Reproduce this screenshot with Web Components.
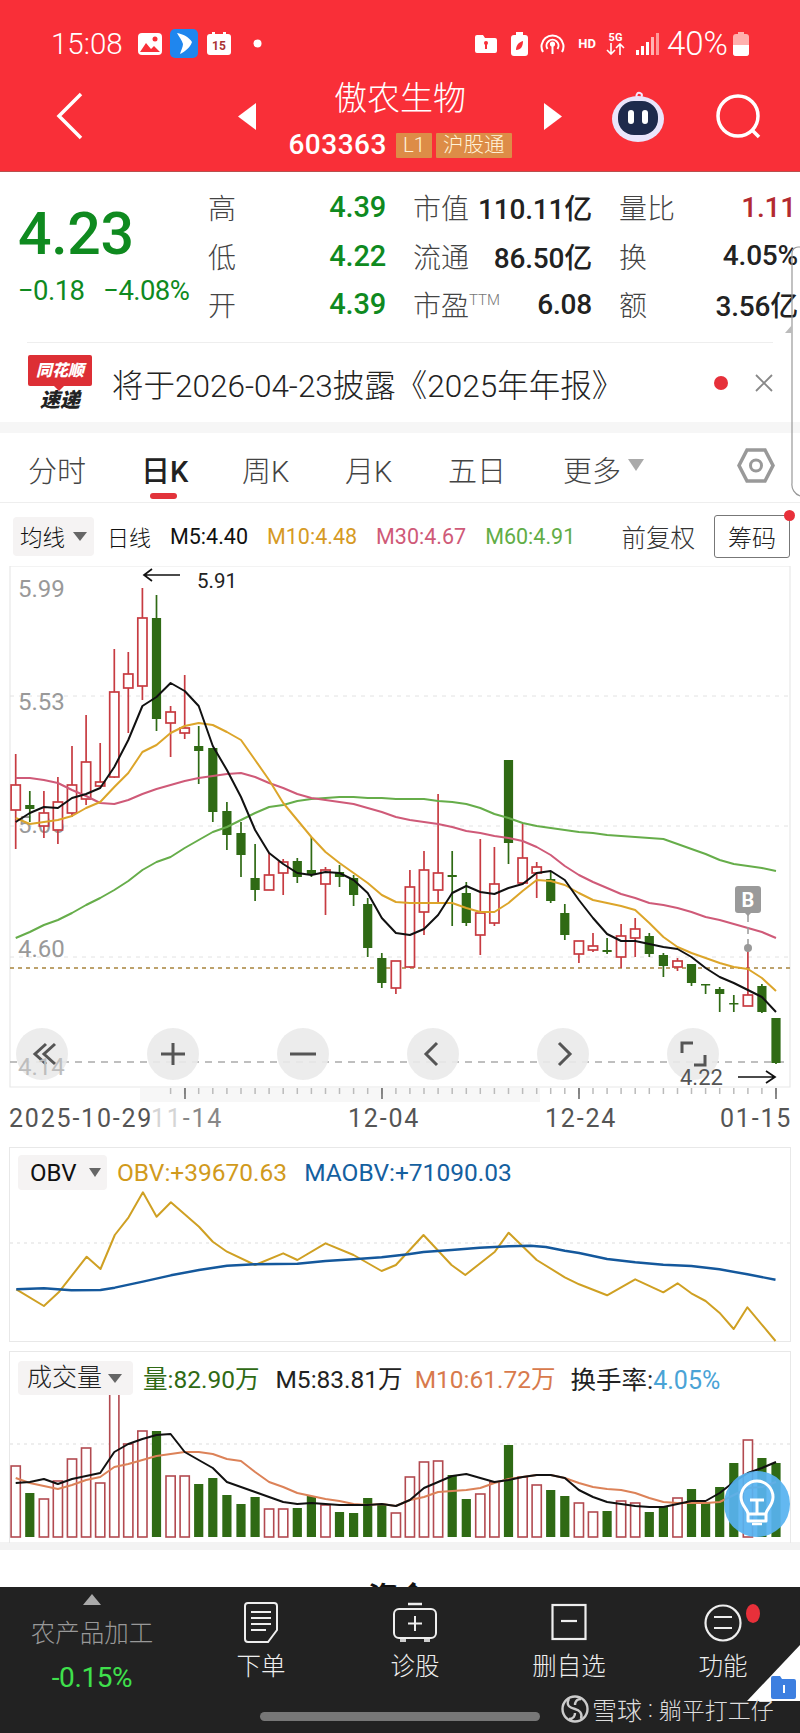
<!DOCTYPE html>
<html lang="zh">
<head>
<meta charset="utf-8">
<title>傲农生物 603363</title>
<style>
  html, body { margin: 0; padding: 0; background: #fff; }
  body {
    width: 800px; height: 1733px; overflow: hidden; position: relative;
    font-family: Roboto, "Noto Sans CJK SC", sans-serif;
    font-weight: 300;
    color: #222;
  }
</style>
</head>
<body>
<stock-header></stock-header>
<quote-panel></quote-panel>
<news-strip></news-strip>
<period-tabs></period-tabs>
<ma-toolbar></ma-toolbar>
<kline-chart></kline-chart>
<obv-chart></obv-chart>
<volume-chart></volume-chart>
<clipped-tabs></clipped-tabs>
<bottom-bar></bottom-bar>
<scroll-edge></scroll-edge>

<script>
// candle x positions are shared by the three charts
const candleX = i => 15.7 + 14.08 * i;
const line = (ys, color, w = 2) =>
  `<polyline fill="none" stroke="${color}" stroke-width="${w}" stroke-linejoin="round" points="${ys.map((y, i) => candleX(i).toFixed(1) + ',' + y).join(' ')}"/>`;

class StockHeader extends HTMLElement {
  connectedCallback() {
    this.attachShadow({ mode: 'open' });
    this.shadowRoot.innerHTML = `
      <style>
        :host { display: block; height: 171px; background: #f92f38; color: #fff; border-bottom: 1px solid #b8504e; }
        .status { display: flex; align-items: center; height: 57px; padding: 15px 51px 0 51px; box-sizing: content-box; }
        .time { font-size: 29.5px; width: 84px; font-weight: 300; }
        .icons, .right { display: flex; align-items: center; }
        .right { margin-left: auto; }
        .batt-text { font-size: 33px; font-weight: 300; margin: 0 5px 0 8px; }
        .hd { font-size: 13px; font-weight: 700; margin: 0 10px 0 13px; }
        .fiveg { display: flex; flex-direction: column; align-items: center; font-size: 11px; font-weight: 700; line-height: 11px; margin-right: 11px; }
        .nav { display: grid; grid-template-columns: 238px 324px 49px 105px 1fr; align-items: center; height: 99px; margin-top: -5px; }
        .back { margin-left: 55px; display: block; }
        .center { display: flex; align-items: center; justify-content: space-between; }
        .title { display: flex; flex-direction: column; align-items: center; }
        .name { font-size: 33px; line-height: 44px; font-weight: 300; margin-top: 3px; }
        .code { display: flex; align-items: center; gap: 4px; margin-top: 10px; }
        .num { font-size: 28px; font-weight: 500; margin-right: 5px; line-height: 28px; letter-spacing: .5px; }
        .tag { background: #dd8c47; color: #fff3d9; font-size: 20.5px; line-height: 25px; height: 25px; padding: 0 7px; border-radius: 1px; }
      </style>
      <div class="status">
        <span class="time">15:08</span>
        <div class="icons">
          <svg width="24" height="22" viewBox="0 0 24 22" style="margin-left:3px"><rect width="24" height="22" rx="4" fill="#fff"/><circle cx="17" cy="6" r="2.5" fill="#f92f38"/><path d="M2 19l6-9 5 6 3-3 6 6z" fill="#f92f38"/></svg>
          <svg width="28" height="29" viewBox="0 0 28 29" style="margin-left:8px"><rect width="28" height="29" rx="5" fill="#1f86ee"/><path d="M7 4c6 1 12 4 15 9-2 6-8 10-12 12 1-4 3-7 3-10C12 11 9 8 7 4z" fill="#fff"/></svg>
          <svg width="24" height="23" viewBox="0 0 24 23" style="margin-left:9px"><rect y="2" width="24" height="21" rx="3" fill="#fff"/><rect x="5" width="3" height="4" fill="#fff"/><rect x="16" width="3" height="4" fill="#fff"/><text x="12" y="18" text-anchor="middle" font-size="12" font-weight="700" fill="#a33">15</text></svg>
          <svg width="9" height="9" viewBox="0 0 9 9" style="margin-left:22px"><circle cx="4.5" cy="4.5" r="4" fill="#fff"/></svg>
        </div>
        <div class="right">
          <svg width="22" height="19" viewBox="0 0 22 19"><path d="M0 3a2 2 0 0 1 2-2h6l2 3h10a2 2 0 0 1 2 2v11a2 2 0 0 1-2 2H2a2 2 0 0 1-2-2z" fill="#fff"/><circle cx="11" cy="9" r="2" fill="#f92f38"/><rect x="10" y="9" width="2" height="6" fill="#f92f38"/></svg>
          <svg width="17" height="24" viewBox="0 0 17 24" style="margin-left:14px"><rect y="3" width="17" height="21" rx="3" fill="#fff"/><rect x="5" width="7" height="4" fill="#fff"/><path d="M5 18c0-5 3-8 7-9 0 5-2 9-7 9z" fill="#f92f38"/></svg>
          <svg width="25" height="26" viewBox="0 0 25 26" style="margin-left:12px" fill="none" stroke="#fff" stroke-width="2"><path d="M3 21a11 11 0 1 1 19 0"/><path d="M7.5 18a6 6 0 1 1 10 0"/><circle cx="12.5" cy="13" r="1.6" fill="#fff"/><path d="M12.5 15v8"/></svg>
          <span class="hd">HD</span>
          <span class="fiveg">5G<svg width="19" height="12" viewBox="0 0 19 12" fill="none" stroke="#fff" stroke-width="1.6"><path d="M5 0v11M1 7l4 4 4-4M14 12V1M10 5l4-4 4 4"/></svg></span>
          <svg width="23" height="22" viewBox="0 0 23 22"><rect x="0" y="17" width="3" height="5" fill="#fff"/><rect x="5" y="13" width="3" height="9" fill="#fff"/><rect x="10" y="9" width="3" height="13" fill="#fff"/><rect x="15" y="4" width="3" height="18" fill="#ffb3b3"/><rect x="20" y="0" width="3" height="22" fill="#ff9a9a"/></svg>
          <span class="batt-text">40%</span>
          <svg width="16" height="24" viewBox="0 0 16 24"><rect x="5" width="6" height="3" fill="#ffb0ae"/><rect y="2" width="16" height="22" rx="3" fill="#ffb0ae"/><path d="M0 13h16v8a3 3 0 0 1-3 3H3a3 3 0 0 1-3-3z" fill="#fff"/></svg>
        </div>
      </div>
      <div class="nav">
        <svg class="back" width="30" height="50" viewBox="0 0 30 50" fill="none" stroke="#fff" stroke-width="3.5"><path d="M26 2L4 24l22 22"/></svg>
        <div class="center">
          <svg width="18" height="27" viewBox="0 0 18 27"><path d="M18 0v27L0 13.5z" fill="#fff"/></svg>
          <div class="title">
            <span class="name">傲农生物</span>
            <div class="code"><span class="num">603363</span><span class="tag">L1</span><span class="tag">沪股通</span></div>
          </div>
          <svg width="18" height="27" viewBox="0 0 18 27"><path d="M0 0v27l18-13.5z" fill="#fff"/></svg>
        </div>
        <span></span>
        <svg width="54" height="52" viewBox="0 0 54 52">
          <path d="M27 8c-3-3-1-7 2-6s2 3 1 4" fill="none" stroke="#f3e9ff" stroke-width="2"/>
          <ellipse cx="27" cy="28" rx="26" ry="23" fill="#eae5fb"/>
          <rect x="7" y="10" width="40" height="34" rx="16" fill="#1e2a4c"/>
          <rect x="17" y="19" width="6" height="14" rx="3" fill="#fff"/><rect x="31" y="19" width="6" height="14" rx="3" fill="#fff"/>
        </svg>
        <svg width="50" height="46" viewBox="0 0 50 46" fill="none" stroke="#fff" stroke-width="3.5"><circle cx="22" cy="22" r="20"/><path d="M36 36l7 7"/></svg>
      </div>`;
  }
}

class QuotePanel extends HTMLElement {
  connectedCallback() {
    this.attachShadow({ mode: 'open' });
    const rows = [
      ['高', '4.39', '市值', '110.11亿', '量比', '1.11'],
      ['低', '4.22', '流通', '86.50亿', '换', '4.05%'],
      ['开', '4.39', '市盈<sup>TTM</sup>', '6.08', '额', '3.56亿'],
    ];
    this.shadowRoot.innerHTML = `
      <style>
        :host { display: block; height: 171px; box-sizing: border-box; padding-top: 11px; position: relative; }
        .wrap { display: flex; }
        .left { width: 208px; padding-left: 18px; box-sizing: border-box; color: #0f8a1f; }
        .big { font-size: 59px; font-weight: 500; line-height: 78px; margin-top: 12px; letter-spacing: -.3px; }
        .sub { display: flex; gap: 19px; font-size: 27.5px; font-weight: 400; line-height: 30px; margin-top: 3px; letter-spacing: -.6px; white-space: nowrap; }
        .grid { display: grid; grid-template-columns: 178px 179px 179px; column-gap: 27px; }
        .cell { display: flex; justify-content: space-between; align-items: center; height: 48.5px; white-space: nowrap; }
        .lab { font-size: 28px; color: #444; font-weight: 300; }
        .lab sup { font-size: 15px; vertical-align: 11px; line-height: 0; color: #777; }
        .val { font-size: 28px; font-weight: 500; color: #222; letter-spacing: -.2px; }
        .g { color: #0f8a1f; font-size: 29px; }
        .r { color: #b32a30; padding-right: 2px; }
        hr { position: absolute; left: 27px; right: 27px; bottom: 0; margin: 0; border: 0; border-top: 1px solid #eee; }
      </style>
      <div class="wrap">
        <div class="left">
          <div class="big">4.23</div>
          <div class="sub"><span>−0.18</span><span>−4.08%</span></div>
        </div>
        <div class="grid">
          ${rows.map((r, i) => `
            <div class="cell"><span class="lab">${r[0]}</span><span class="val g">${r[1]}</span></div>
            <div class="cell"><span class="lab">${r[2]}</span><span class="val">${r[3]}</span></div>
            <div class="cell"><span class="lab">${r[4]}</span><span class="val ${i === 0 ? 'r' : ''}">${r[5]}</span></div>`).join('')}
        </div>
      </div>
      <hr>`;
  }
}

class NewsStrip extends HTMLElement {
  connectedCallback() {
    this.attachShadow({ mode: 'open' });
    this.shadowRoot.innerHTML = `
      <style>
        :host { display: flex; align-items: center; height: 79px; padding: 0 27px 0 28px; border-bottom: 11px solid #f6f6f6; }
        .logo { width: 64px; display: flex; flex-direction: column; align-items: center; font-style: italic; font-weight: 900; line-height: 1; }
        .bubble { width: 64px; height: 31px; background: #dd2f35; color: #fff; font-size: 16px; display: flex; align-items: center; justify-content: center; border-radius: 2px; position: relative; }
        .bubble::after { content: ""; position: absolute; left: 26px; bottom: -5px; border: 5px solid transparent; border-bottom: 0; border-top-color: #dd2f35; }
        .sd { font-size: 20px; color: #222; margin-top: 4px; }
        .text { font-size: 31.5px; margin-left: 20px; color: #222; white-space: nowrap; }
        .dot { width: 14px; height: 14px; border-radius: 50%; background: #e6303a; margin-left: auto; }
        svg { margin-left: 27px; }
      </style>
      <div class="logo"><div class="bubble">同花顺</div><div class="sd">速递</div></div>
      <span class="text">将于2026-04-23披露《2025年年报》</span>
      <span class="dot"></span>
      <svg width="18" height="18" viewBox="0 0 18 18" stroke="#888" stroke-width="1.8"><path d="M1 1l16 16M17 1L1 17"/></svg>`;
  }
}

class PeriodTabs extends HTMLElement {
  connectedCallback() {
    this.attachShadow({ mode: 'open' });
    this.shadowRoot.innerHTML = `
      <style>
        :host { display: grid; grid-template-columns: 113px 101px 103px 103px 115px 174px 1fr; align-items: center; height: 70px; box-sizing: border-box; padding: 2px 0 0 28px; border-bottom: 1px solid #eee; font-size: 29px; color: #444; }
        .on { color: #222; font-weight: 500; position: relative; }
        .on::after { content: ""; position: absolute; left: 9px; bottom: -9px; width: 27px; height: 6px; border-radius: 3px; background: #e2333b; }
        .more { display: flex; align-items: center; gap: 7px; }
        .tri { width: 0; height: 0; border: 8px solid transparent; border-top: 12px solid #aaa; border-bottom: 0; margin-top: -8px; }
        svg { margin-top: -6px; }
      </style>
      <span>分时</span><span class="on">日K</span><span>周K</span><span>月K</span><span>五日</span>
      <span class="more">更多<i class="tri"></i></span>
      <svg width="38" height="35" viewBox="0 0 38 35" fill="none" stroke="#999" stroke-width="3.5"><path d="M10 2h18l8 15.5L28 33H10L2 17.5z"/><circle cx="19" cy="17.5" r="5.5" stroke-width="3"/></svg>`;
  }
}

class MaToolbar extends HTMLElement {
  connectedCallback() {
    this.attachShadow({ mode: 'open' });
    this.shadowRoot.innerHTML = `
      <style>
        :host { display: flex; align-items: center; gap: 19px; height: 63px; box-sizing: border-box; padding: 3px 10px 0 13px; font-size: 21.5px; white-space: nowrap; color: #111; }
        .chip { display: flex; align-items: center; justify-content: space-between; width: 81px; height: 39px; box-sizing: border-box; padding: 0 7px; background: #f5f3f3; border-radius: 4px; font-size: 22.5px; margin-right: -6px; }
        .tri { border: 7px solid transparent; border-top: 9px solid #666; border-bottom: 0; width: 0; height: 0; }
        .cn { font-size: 22px; }
        .fq { font-size: 24.5px; margin-left: auto; color: #333; }
        .cm { position: relative; width: 76px; height: 43px; box-sizing: border-box; border: 1px solid #777; border-radius: 3px; font-size: 24px; display: flex; align-items: center; justify-content: center; color: #222; }
        .cm::after { content: ""; position: absolute; right: -6px; top: -6px; width: 11px; height: 11px; border-radius: 50%; background: #e8303a; }
      </style>
      <span class="chip">均线<i class="tri"></i></span>
      <span class="cn">日线</span>
      <span style="font-weight:400">M5:4.40</span>
      <span style="color:#d69a24;font-weight:400">M10:4.48</span>
      <span style="color:#cf5a78;font-weight:400">M30:4.67</span>
      <span style="color:#62ad46;font-weight:400">M60:4.91</span>
      <span class="fq">前复权</span>
      <span class="cm">筹码</span>`;
  }
}

// [wick top, body top, body bottom, wick bottom, up?]
const CANDLES = [
  [754,785,810,849,1],[791,805,809,822,0],[791,813,826,838,1],[777,802,830,844,1],[746,785,813,817,1],
  [715,762,799,805,1],[743,782,786,787,1],[649,692,777,778,1],[652,674,688,733,1],[588,618,686,700,1],
  [595,618,719,731,0],[706,712,723,757,1],[675,728,733,739,1],[726,746,751,784,0],[748,748,812,822,0],
  [802,811,835,850,0],[822,833,855,877,0],[844,878,890,901,0],[853,875,890,890,1],[859,862,873,895,1],
  [858,861,877,883,0],[837,870,875,877,0],[867,870,884,915,1],[865,872,877,887,0],[875,878,895,906,0],
  [898,904,948,957,0],[953,958,983,988,0],[961,961,988,994,1],[870,887,967,968,1],[851,870,912,935,1],
  [794,873,890,902,1],[851,875,877,926,0],[882,893,923,926,0],[839,913,935,955,1],[847,884,923,926,1],
  [760,760,843,864,0],[824,858,883,885,1],[862,867,873,898,1],[871,879,901,903,0],[904,913,935,940,0],
  [941,941,954,963,1],[933,946,950,952,1],[938,950,952,954,0],[924,936,957,968,1],[918,929,938,957,1],
  [933,936,954,957,0],[953,955,966,977,0],[958,961,967,971,1],[964,964,983,986,0],[984,984,985,994,0],
  [987,989,994,1012,0],[995,1003,1004,1012,0],[948,995,1006,1006,1],[984,986,1012,1013,0],[1018,1018,1063,1064,0],
];
const M5 = [822,813,807,808,798,794,788,767,740,706,697,683,691,706,746,770,797,830,853,864,873,875,872,873,880,893,918,933,935,929,915,893,886,892,894,888,884,873,871,880,900,918,934,941,941,944,947,949,957,968,977,983,990,997,1012];
const M10 = [818,824,822,820,816,808,802,787,773,752,745,733,726,723,725,732,740,760,780,803,820,837,852,863,873,883,895,902,903,903,903,903,908,912,912,903,891,880,881,885,893,900,903,906,910,923,937,947,953,958,963,967,969,978,991];
const M30 = [778,778,780,783,790,796,803,804,800,794,789,785,781,778,776,774,773,777,783,788,794,798,800,802,804,808,812,817,820,822,824,827,831,833,836,838,841,847,855,866,875,882,888,894,898,903,905,908,912,917,920,924,928,932,938];
const M60 = [938,932,925,920,913,905,898,890,881,870,862,857,848,840,832,827,820,813,807,805,801,799,798,797,797,798,798,799,799,799,801,802,804,808,814,818,823,826,828,830,832,833,835,836,837,838,839,844,849,854,860,864,866,868,871];

class KlineChart extends HTMLElement {
  connectedCallback() {
    this.attachShadow({ mode: 'open' });
    const red = '#c73b41', green = '#2f6a14';
    const candles = CANDLES.map(([wt, bt, bb, wb, up], i) => {
      const x = candleX(i).toFixed(1), c = up ? red : green;
      return `<path d="M${x} ${wt}V${bt}M${x} ${bb}V${wb}" stroke="${c}" stroke-width="1.7"/>` +
        (up ? `<rect x="${x - 4.6}" y="${bt}" width="9.2" height="${bb - bt}" fill="#fff" stroke="${c}" stroke-width="1.7"/>`
            : `<rect x="${x - 4.6}" y="${bt}" width="9.2" height="${Math.max(bb - bt, 1.5)}" fill="${c}"/>`);
    }).join('');
    const ticks = CANDLES.map((c, i) => candleX(i) > 168 ? `<path d="M${candleX(i).toFixed(1)} 1088v6" stroke="#bbb" stroke-width="1.5"/>` : '').join('');
    const btn = (cx, icon) => `<circle cx="${cx}" cy="1054" r="26" fill="#eaeaea" fill-opacity=".9"/><g fill="none" stroke="#555" stroke-width="3">${icon}</g>`;
    this.shadowRoot.innerHTML = `
      <style>
        :host { display: block; height: 581px; }
        svg { display: block; }
        text { font-family: Roboto, "Noto Sans CJK SC", sans-serif; font-weight: 400; }
        .px { font-size: 24px; fill: #999; }
        .ax { font-size: 25px; fill: #555; letter-spacing: 1.8px; }
      </style>
      <svg width="800" height="581" viewBox="0 566 800 581">
        <path d="M10 566H790V1087H10z" fill="none" stroke="#e8e8e8" stroke-width="1.2"/>
        <g stroke="#e2e2e2" stroke-width="1" stroke-dasharray="4 5"><path d="M10 696H790M10 826H790M10 957H790"/></g>
        <text class="px" x="18" y="597">5.99</text>
        <text class="px" x="18" y="710">5.53</text>
        <text class="px" x="18" y="833">5.06</text>
        <text class="px" x="18" y="957">4.60</text>
        <path d="M10 968H790" stroke="#a8843c" stroke-width="1.5" stroke-dasharray="4 4"/>
        <path d="M10 1062H790" stroke="#aaa" stroke-width="1.5" stroke-dasharray="7 6"/>
        ${candles}
        ${line(M60, '#66ad4a')}${line(M30, '#cf5a78')}${line(M10, '#dca52a')}${line(M5, '#111')}
        <path d="M180 575H144M152 569l-8 6 8 6" fill="none" stroke="#111" stroke-width="1.7"/>
        <text x="197" y="588" font-size="20.5" fill="#222">5.91</text>
        <path d="M748 915V948" stroke="#999" stroke-width="1.5" stroke-dasharray="7 5"/>
        <circle cx="748" cy="948" r="4" fill="#999"/>
        <path d="M738 886h20a3 3 0 0 1 3 3v21a3 3 0 0 1-3 3h-7l-3 3-3-3h-7a3 3 0 0 1-3-3v-21a3 3 0 0 1 3-3z" fill="#9a9a9a"/>
        <text x="748" y="907" font-size="20" text-anchor="middle" fill="#fff" style="font-weight:700">B</text>
        ${btn(42, '<path d="M46 1044l-11 10 11 10M55 1044l-11 10 11 10"/>')}
        ${btn(173, '<path d="M173 1043v22M161 1054h24"/>')}
        ${btn(303, '<path d="M290 1054h26"/>')}
        ${btn(433, '<path d="M437 1043l-11 11 11 11"/>')}
        ${btn(563, '<path d="M559 1043l11 11-11 11"/>')}
        ${btn(693, '<path d="M682 1053v-10h11M705 1055v10h-11"/>')}
        <text class="px" x="18" y="1075" style="fill:#bdbdbd">4.14</text>
        <text x="680" y="1085" font-size="22" fill="#555">4.22</text>
        <path d="M738 1077H775M766 1071l9 6-9 6" fill="none" stroke="#111" stroke-width="1.7"/>
        <rect x="140" y="1088" width="400" height="14" fill="#f7f7f7"/>
        ${ticks}
        <path d="M185 1088v11M382 1088v11M579 1088v11M776 1088v11" stroke="#777" stroke-width="1.7"/>
        <text class="ax" x="151" y="1127"><tspan fill="#d5d5d5">11</tspan><tspan fill="#888">-14</tspan></text>
        <text class="ax" x="9" y="1127">2025-10-29</text>
        <text class="ax" x="348" y="1127">12-04</text>
        <text class="ax" x="545" y="1127">12-24</text>
        <text class="ax" x="720" y="1127">01-15</text>
      </svg>`;
  }
}

class ObvChart extends HTMLElement {
  connectedCallback() {
    this.attachShadow({ mode: 'open' });
    // traced from the panel, in 1.96x / 3x crop units
    const trace = pts => pts.map(([x, y]) => (x / 1.96).toFixed(1) + ',' + (y / 3).toFixed(1)).join(' ');
    const obv = [[32,478],[86,528],[115,487],[170,380],[197,417],[225,315],[252,262],[280,187],[307,260],[335,217],[390,290],[417,335],[445,365],[500,405],[555,370],[583,390],[638,340],[693,375],[748,423],[776,405],[830,315],[885,405],[912,435],[970,365],[997,308],[1052,390],[1107,442],[1135,463],[1190,496],[1245,448],[1300,487],[1328,460],[1355,490],[1383,513],[1410,548],[1438,597],[1465,532],[1520,633]];
    const ma = [[32,478],[86,475],[140,481],[197,480],[225,473],[280,455],[335,436],[390,420],[445,407],[500,403],[583,401],[638,393],[693,388],[748,382],[800,373],[830,366],[885,360],[940,353],[997,349],[1040,347],[1070,351],[1107,362],[1135,369],[1190,387],[1245,397],[1300,404],[1355,408],[1410,418],[1465,433],[1520,449]];
    this.shadowRoot.innerHTML = `
      <style>
        :host { display: grid; width: 782px; height: 195px; margin-left: 9px; box-sizing: border-box; border: 1px solid #e8e8e8; margin-bottom: 9px; }
        :host > * { grid-area: 1 / 1; }
        .legend { display: flex; align-items: flex-start; gap: 17px; padding: 7px 0 0 8px; font-size: 24.5px; font-weight: 400; white-space: nowrap; z-index: 1; }
        .legend span { line-height: 36px; }
        .chip { display: flex; align-items: center; justify-content: space-between; width: 89px; height: 35px; box-sizing: border-box; padding: 0 6px 0 12px; background: #f5f3f3; border-radius: 4px; color: #111; font-size: 24px; margin-right: -7px; }
        .tri { border: 6px solid transparent; border-top: 9px solid #666; border-bottom: 0; width: 0; height: 0; }
        svg { display: block; }
      </style>
      <svg width="780" height="193" viewBox="10 1148 780 193" style="overflow:visible">
        <path d="M10 1243H790" stroke="#ddd" stroke-width="1" stroke-dasharray="3 4"/>
        <g transform="translate(0,1130)" fill="none" stroke-linejoin="round">
          <polyline points="${trace(obv)}" stroke="#cfa023" stroke-width="2"/>
          <polyline points="${trace(ma)}" stroke="#14589c" stroke-width="2.4"/>
        </g>
      </svg>
      <div class="legend">
        <span class="chip">OBV<i class="tri"></i></span>
        <span style="color:#d19a1c">OBV:+39670.63</span>
        <span style="color:#14609f">MAOBV:+71090.03</span>
      </div>`;
  }
}

const VOLS = [
  [1466,1],[1493,0],[1499,1],[1481,1],[1459,1],[1448,1],[1483,1],[1391,1],[1444,1],[1431,1],[1431,0],[1476,1],[1476,1],[1484,0],
  [1478,0],[1495,0],[1504,0],[1497,0],[1509,1],[1509,1],[1508,0],[1496,0],[1505,1],[1512,0],[1513,0],[1498,0],[1504,0],[1513,1],
  [1477,1],[1462,1],[1461,1],[1475,0],[1499,0],[1494,1],[1482,1],[1445,0],[1477,1],[1485,1],[1490,0],[1496,0],[1503,1],[1512,1],
  [1511,0],[1501,1],[1503,1],[1512,0],[1507,0],[1498,1],[1489,0],[1503,0],[1487,0],[1463,0],[1440,1],[1458,0],[1463,0],
];
const VM5 = [1483,1482,1479,1484,1479,1476,1473,1452,1444,1439,1435,1434,1452,1460,1468,1482,1487,1492,1497,1502,1504,1503,1504,1505,1505,1505,1504,1506,1500,1488,1482,1476,1474,1478,1482,1480,1477,1475,1475,1478,1490,1497,1502,1504,1506,1507,1507,1504,1501,1501,1493,1482,1473,1468,1462];
const VM10 = [1478,1483,1486,1489,1485,1480,1477,1467,1464,1460,1456,1454,1452,1452,1454,1459,1461,1472,1482,1487,1493,1496,1499,1501,1504,1505,1504,1506,1500,1497,1492,1491,1490,1488,1483,1479,1477,1475,1475,1478,1483,1487,1489,1490,1493,1498,1502,1503,1503,1503,1502,1495,1488,1487,1482];

class VolumeChart extends HTMLElement {
  connectedCallback() {
    this.attachShadow({ mode: 'open' });
    const bars = VOLS.map(([top, up], i) => {
      const x = candleX(i);
      return up
        ? `<rect x="${(x - 4.6).toFixed(1)}" y="${top}" width="9.2" height="${1537 - top}" fill="#fff" stroke="#b24a50" stroke-width="1.6"/>`
        : `<rect x="${(x - 4.6).toFixed(1)}" y="${top}" width="9.2" height="${1537 - top}" fill="#2f6a14"/>`;
    }).join('');
    this.shadowRoot.innerHTML = `
      <style>
        :host { display: grid; width: 782px; height: 192px; margin-left: 9px; box-sizing: border-box; border-top: 1px solid #e8e8e8; border-left: 1px solid #e8e8e8; border-right: 1px solid #e8e8e8; position: relative; }
        :host > * { grid-area: 1 / 1; }
        .legend { display: flex; align-items: flex-start; gap: 18px; padding: 9px 0 0 8px; font-size: 24.5px; font-weight: 400; white-space: nowrap; }
        .legend > span { line-height: 34px; padding-top: 2px; }
        .legend > .chip { padding-top: 0; }
        .chip { display: flex; align-items: center; justify-content: space-between; width: 115px; height: 34px; box-sizing: border-box; padding: 0 11px 0 9px; background: #f5f3f3; border-radius: 4px; color: #222; font-weight: 300; font-size: 25px; margin-right: -8px; }
        .tri { border: 7px solid transparent; border-top: 9px solid #666; border-bottom: 0; width: 0; height: 0; }
        svg { display: block; }
        .bulb { position: absolute; left: 714px; top: 119px; }
      </style>
      <svg width="780" height="191" viewBox="10 1352 780 191" style="overflow:visible">
        <path d="M10 1444H790" stroke="#ddd" stroke-width="1" stroke-dasharray="3 4"/>
        ${bars}
        ${line(VM10, '#dc8258')}${line(VM5, '#111')}
      </svg>
      <div class="legend">
        <span class="chip">成交量<i class="tri"></i></span>
        <span style="color:#2f6a14">量:82.90万</span>
        <span style="color:#222;margin-left:-2px">M5:83.81万</span>
        <span style="color:#d87a4c;margin-left:-6px">M10:61.72万</span>
        <span style="color:#222;margin-left:-3px;font-size:25.5px">换手率:<span style="color:#4aa3d6;font-size:25px">4.05%</span></span>
      </div>
      <svg class="bulb" width="66" height="66" viewBox="0 0 66 66">
        <circle cx="33" cy="33" r="33" fill="#57b3f0" fill-opacity=".93"/>
        <g fill="none" stroke="#fff" stroke-width="3" stroke-linejoin="round">
          <path d="M24 43c0-5-7-8-7-17a16 16 0 0 1 32 0c0 9-7 12-7 17v7H24z"/>
          <path d="M26 29h14M33 29v14M25 43h16"/>
          <path d="M28 53h10" stroke-width="2.500"/>
        </g>
      </svg>`;
  }
}

class ClippedTabs extends HTMLElement {
  connectedCallback() {
    this.attachShadow({ mode: 'open' });
    // tab row of the next section, only the tops of the glyphs stick out above the bar
    this.shadowRoot.innerHTML = `
      <style>
        :host { display: block; height: 45px; box-sizing: border-box; border-top: 8px solid #f3f3f3; margin-top: -1px; overflow: hidden; background: #fff; }
        span { display: block; margin: 28px 0 0 368px; font-size: 30px; font-weight: 700; line-height: 40px; color: #111; }
      </style>
      <span>资金</span>`;
  }
}

class BottomBar extends HTMLElement {
  connectedCallback() {
    this.attachShadow({ mode: 'open' });
    this.shadowRoot.innerHTML = `
      <style>
        :host { display: block; height: 146px; background: #222; color: #eee; position: relative; overflow: hidden; }
        .row { display: grid; grid-template-columns: 184px repeat(4, 154px); height: 125px; }
        .sector { display: flex; flex-direction: column; align-items: center; padding-top: 7px; box-sizing: border-box; }
        .tri { width: 0; height: 0; border: 9px solid transparent; border-bottom: 11px solid #aaa; border-top: 0; }
        .sn { font-size: 24.5px; color: #999; line-height: 36px; margin-top: 11px; }
        .pc { font-size: 28px; color: #3fe04c; font-weight: 400; line-height: 34px; margin-top: 9px; letter-spacing: -.4px; }
        .act { display: flex; flex-direction: column; align-items: center; padding-top: 15px; box-sizing: border-box; position: relative; }
        .ic { height: 42px; display: block; }
        .act span { font-size: 24.5px; line-height: 34px; margin-top: 6px; }
        .dot { position: absolute; left: 100px; top: 17px; width: 14px; height: 19px; border-radius: 50%; background: #e8303a; }
        .home { width: 280px; height: 9px; border-radius: 5px; background: #777; margin-left: 260px; }
        .mark { position: absolute; left: 561px; top: 104px; display: flex; align-items: center; color: #ddd; white-space: nowrap; font-weight: 300; }
        .mark b { font-weight: 300; font-size: 25px; margin-left: 3px; }
        .mark i { font-style: normal; font-size: 23px; margin-left: 6px; }
        .corner { position: absolute; right: 0; top: 58px; }
      </style>
      <div class="row">
        <div class="sector"><i class="tri"></i><span class="sn">农产品加工</span><span class="pc">-0.15%</span></div>
        <div class="act">
          <svg class="ic" width="36" height="42" viewBox="0 0 36 42" fill="none" stroke="#eee" stroke-width="2"><path d="M5 1h26a3 3 0 0 1 3 3v24l-9 12H5a3 3 0 0 1-3-3V4a3 3 0 0 1 3-3z"/><path d="M8 10h20M8 16h20M8 22h20M8 28h15"/></svg>
          <span>下单</span>
        </div>
        <div class="act">
          <svg class="ic" width="44" height="42" viewBox="0 0 44 42" fill="none" stroke="#eee" stroke-width="2"><path d="M15 2h14" stroke-width="2.5"/><rect x="1" y="7" width="42" height="29" rx="5"/><path d="M22 14v15M15 21.500h14"/><path d="M7 37h6v3H7zM31 37h6v3h-6z" fill="#ccc" stroke="none"/></svg>
          <span>诊股</span>
        </div>
        <div class="act">
          <svg class="ic" width="36" height="42" viewBox="0 0 36 42" fill="none" stroke="#eee" stroke-width="2.2"><rect x="1.500" y="3" width="33" height="34"/><path d="M10 19h16"/></svg>
          <span>删自选</span>
        </div>
        <div class="act">
          <svg class="ic" width="38" height="42" viewBox="0 0 38 42" fill="none" stroke="#eee" stroke-width="2.2"><circle cx="19" cy="21" r="17.500"/><path d="M10 15h18M10 26h18"/></svg>
          <i class="dot"></i>
          <span>功能</span>
        </div>
      </div>
      <div class="home"></div>
      <svg class="corner" width="53" height="56" viewBox="0 0 53 56">
        <path d="M53 0V56H0z" fill="#fff"/>
        <path d="M24 33a2 2 0 0 1 2-2h7l2 3h12a2 2 0 0 1 2 2v16a2 2 0 0 1-2 2H26a2 2 0 0 1-2-2z" fill="#3d7fe0"/>
        <path d="M36 40h2v8h-2z" fill="#fff"/>
      </svg>
      <div class="mark">
        <svg width="28" height="28" viewBox="0 0 28 28" fill="none" stroke="#ccc" stroke-width="2.4"><circle cx="14" cy="14" r="12.500"/><path d="M8 4c-4 7 2 9 6 10s8 4 6 10M20 4c-5 0-6 4-6 6M8 24c5 0 6-4 6-6"/></svg>
        <b>雪球</b><i>:</i><i>躺平打工仔</i>
      </div>`;
  }
}

// rounded screen-capture handle that sits over the right edge of the page
class ScrollEdge extends HTMLElement {
  connectedCallback() {
    this.attachShadow({ mode: 'open' });
    this.shadowRoot.innerHTML = `
      <style>
        :host { display: block; position: absolute; left: 780px; top: 240px; }
        svg { display: block; }
      </style>
      <svg width="20" height="262" viewBox="0 0 20 262" fill="none" stroke="#999" stroke-width="1.2">
        <path d="M20 7h-2a6 6 0 0 0-6 6v230a12 12 0 0 0 8 13"/>
        <path d="M12 85v8H5z" fill="#bbb" stroke="none"/>
      </svg>`;
  }
}

customElements.define('stock-header', StockHeader);
customElements.define('quote-panel', QuotePanel);
customElements.define('news-strip', NewsStrip);
customElements.define('period-tabs', PeriodTabs);
customElements.define('ma-toolbar', MaToolbar);
customElements.define('kline-chart', KlineChart);
customElements.define('obv-chart', ObvChart);
customElements.define('volume-chart', VolumeChart);
customElements.define('clipped-tabs', ClippedTabs);
customElements.define('bottom-bar', BottomBar);
customElements.define('scroll-edge', ScrollEdge);
</script>
</body>
</html>
